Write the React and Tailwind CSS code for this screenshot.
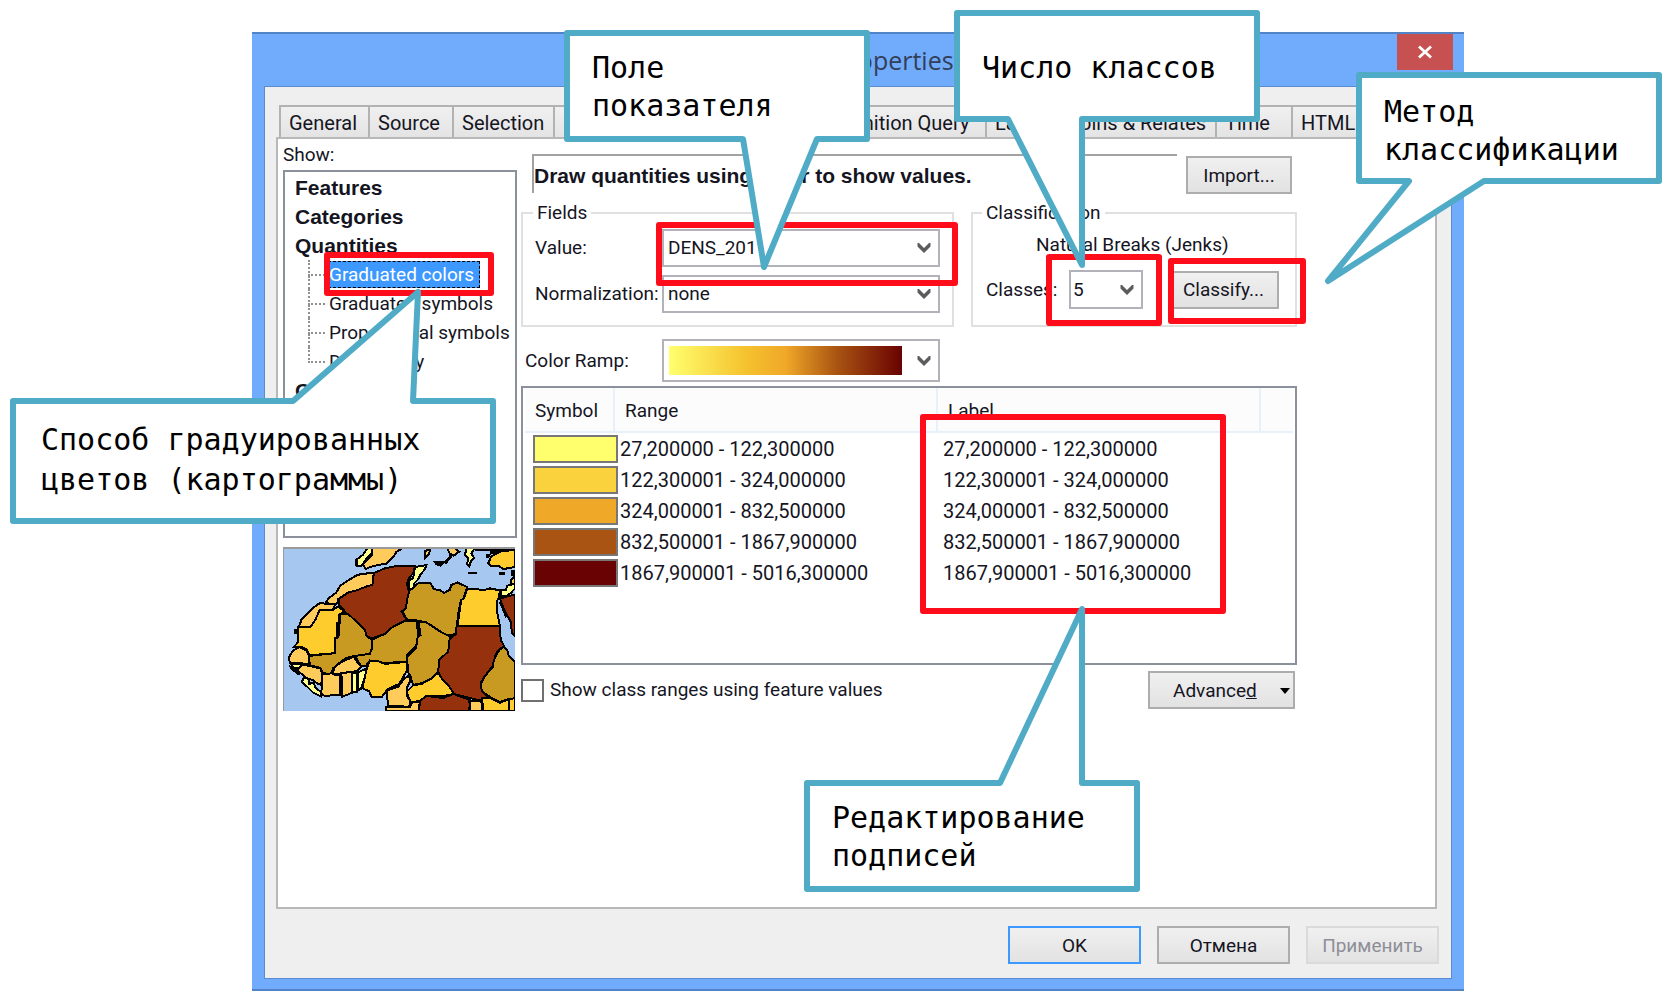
import React from "react";

const tabs = [
  { name: "General", width: "w-[89px]" },
  { name: "Source", width: "w-[84px]" },
  { name: "Selection", width: "w-[101px]" },
  { name: "Display", width: "w-[87px]", covered: true },
  { name: "Symbology", width: "w-[111px]", active: true, covered: true },
  { name: "Fields", width: "w-[67px]", covered: true },
  { name: "Definition Query", width: "w-[167px]" },
  { name: "Labels", width: "w-[74px]" },
  { name: "Joins & Relates", width: "w-[156px]" },
  { name: "Time", width: "w-[76px]" },
  { name: "HTML", width: "w-[120px]" },
];

const quantityOptions = [
  "Graduated colors",
  "Graduated symbols",
  "Proportional symbols",
  "Dot density",
];

const classes = [
  { color: "bg-[#ffff6e]", range: "27,200000 - 122,300000" },
  { color: "bg-[#fad23e]", range: "122,300001 - 324,000000" },
  { color: "bg-[#f0a828]", range: "324,000001 - 832,500000" },
  { color: "bg-[#a95412]", range: "832,500001 - 1867,900000" },
  { color: "bg-[#690202]", range: "1867,900001 - 5016,300000" },
];

const WATER = "#a6c8f0";
const ORANGE = "#ffcc5c";
const YELLOW = "#ffcc2e";
const TAN = "#c99a22";
const BROWN = "#96310e";
const PALE = "#ffff8c";

const countries = [
  [PALE, "262,110 260,90 280,75 292,56 312,56 306,72 290,86 276,108"],
  [ORANGE, "308,56 398,56 380,66 372,80 350,102 325,106 300,112 288,118 280,104 296,88 308,74"],
  [ORANGE, "466,64 480,58 478,74 466,84"],
  [ORANGE, "532,56 556,56 568,66 552,78 540,72"],
  [ORANGE, "494,96 520,98 512,108 500,104"],
  [PALE, "588,56 614,56 604,72 612,84 604,92 598,110 592,104 594,86 586,76"],
  [YELLOW, "655,100 664,80 690,66 735,60 735,112 700,118 685,108 662,108"],
  [ORANGE, "724,150 735,140 735,168 722,164"],
  [PALE, "692,182 708,180 712,168 735,162 735,176 722,190 710,198 694,200"],
  [ORANGE, "168,220 176,206 198,190 212,168 232,154 262,136 280,132 312,130 308,165 285,172 260,182 236,188 208,206 200,224"],
  [BROWN, "312,130 345,116 384,108 436,110 430,130 414,150 412,164 418,190 412,215 406,238 395,245 410,270 370,290 345,312 305,326 290,318 286,300 255,270 232,252 208,225 206,208 236,188 260,182 285,172 308,165"],
  [PALE, "436,112 470,106 464,120 452,134 444,150 434,160 430,180 420,184 416,152 430,146 432,130"],
  [TAN, "418,184 446,160 482,160 492,178 512,182 522,190 540,180 544,166 562,158 592,172 580,208 572,215 566,245 558,312 530,318 505,300 470,278 440,272 412,270 398,245 408,236 412,210"],
  [YELLOW, "592,178 620,178 640,182 660,176 690,182 686,204 680,215 680,240 690,290 562,290 570,240 574,210 582,206"],
  [BROWN, "560,290 690,290 692,330 702,348 684,362 676,376 670,405 645,438 632,460 636,484 655,500 630,512 600,504 550,492 538,470 515,445 505,425 505,395 515,378 535,365 538,330 558,312"],
  [TAN, "702,350 712,362 716,378 735,395 735,508 712,508 690,516 662,502 636,484 632,462 645,438 668,412 672,390 688,360"],
  [BROWN, "690,206 712,200 735,194 735,318 726,310 722,275 702,240"],
  [TAN, "446,276 470,278 510,305 540,320 535,365 508,390 505,425 485,445 455,460 430,465 422,440 414,425 412,380 438,355 442,320 452,316"],
  [TAN, "410,272 440,275 445,310 440,345 412,375 410,395 340,400 300,392 288,408 274,408 262,390 256,378 300,370 308,350 306,330 345,312 370,290"],
  [YELLOW, "300,392 320,392 345,402 410,396 412,420 388,462 356,476 345,490 335,502 305,500 298,484 278,475 290,420"],
  [TAN, "212,254 235,252 286,300 290,318 306,330 308,352 300,372 255,378 230,384 205,402 190,415 185,432 160,430 152,414 120,406 118,378 195,370 196,325 206,320"],
  [YELLOW, "86,292 120,292 138,268 150,240 190,240 205,230 224,245 208,255 206,320 196,325 195,370 120,376 112,360 96,352 72,352 86,336"],
  [ORANGE, "88,290 96,268 128,236 150,220 196,224 190,240 150,240 138,268 122,292"],
  [ORANGE, "58,382 70,362 90,352 110,362 118,378 118,402 60,398"],
  [PALE, "62,402 95,402 92,412 76,416"],
  [ORANGE, "82,420 98,404 120,408 152,416 157,430 155,465 142,460 130,450 112,446 100,436"],
  [PALE, "97,456 102,442 116,446 118,462 132,458 138,474 156,488 154,500 130,488 112,470"],
  [ORANGE, "157,434 185,430 200,436 212,436 212,494 165,498 155,492"],
  [ORANGE, "188,430 196,410 220,394 252,380 262,396 274,410 262,424 235,426 208,434"],
  [ORANGE, "215,430 246,426 250,450 248,488 218,500"],
  [PALE, "248,428 262,430 262,486 248,486"],
  [PALE, "264,428 290,416 286,440 274,476 264,482"],
  [ORANGE, "350,482 385,470 404,446 416,438 422,452 412,472 412,500 422,515 418,530 355,528"],
  [YELLOW, "412,484 430,466 455,462 485,446 505,428 515,445 538,470 552,492 520,498 470,498 450,512 425,518 414,498"],
  [BROWN, "450,512 470,498 520,504 550,492 600,510 598,543 448,543"],
  [ORANGE, "350,530 420,532 426,518 450,514 446,543 350,543"],
  [ORANGE, "598,512 634,514 638,543 602,543"],
  [YELLOW, "636,504 662,504 690,518 718,508 718,543 640,543"],
  [YELLOW, "718,508 735,504 735,543 718,543"],
];

function MapPreview() {
  return (
    <svg
      viewBox="40 52 695 491"
      preserveAspectRatio="none"
      shapeRendering="crispEdges"
      role="img"
      aria-label="Map preview"
      className="mt-[9px] block h-[164px] w-[232px]"
    >
      <rect x="40" y="52" width="695" height="491" fill={WATER} />
      {countries.map(([fill, points]) => (
        <polygon key={points} points={points} fill={fill} stroke="#000" strokeWidth="6" />
      ))}
      <g fill="#000">
        <path d="M614 56h121v8h-45l-14 10h-14l-6 12h-8v-14h12v-8h-46zM594 126h28v6h-28zM686 128h20v9h-20zM72 298h14v14h-14zM198 276h8v50h-8zM256 90h10v20h-10zM56 402l40 30-10 4-24-18zM494 94h26v8h-10v8h-10v-6h-6zM520 98l20-22 8 6-20 22zM724 120h11v18h-11zM258 430h8v56h-8zM690 210l24 50-8 4-18-44z" />
      </g>
      <path d="M40 543V54H735" fill="none" stroke="#9a9a9a" strokeWidth="6" />
    </svg>
  );
}

function Chevron() {
  return (
    <svg
      viewBox="0 0 14 12"
      className="pointer-events-none absolute right-[9px] top-1/2 h-3 w-[14px] -translate-y-1/2"
      aria-hidden="true"
    >
      <path d="M0.5 1v3.5L7 11 13.5 4.5V1L12 1 7 6 2 1z" fill="#5c5c5c" />
    </svg>
  );
}

function Combo({ id, options, className, textClass = "pl-1", children }) {
  return (
    <div className={`relative ${className}`}>
      <select
        id={id}
        className={`block h-full w-full appearance-none border-2 border-[#b1b2ba] bg-white pr-7 outline-none ${textClass}`}
      >
        {options.map((o) => (
          <option key={o}>{o}</option>
        ))}
      </select>
      {children}
      <Chevron />
    </div>
  );
}

function PushButton({ className = "", border = "border-[#adadad]", children, ...rest }) {
  return (
    <button
      type="button"
      className={`h-[38px] border-2 bg-linear-to-b from-[#f0f0f0] to-[#e2e2e2] pt-px ${border} ${className}`}
      {...rest}
    >
      {children}
    </button>
  );
}

function Tabs() {
  return (
    <div role="tablist" className="flex h-8 overflow-hidden pl-[14px] pr-[49px] text-[20px]">
      {tabs.map((t) => (
        <button
          key={t.name}
          type="button"
          role="tab"
          aria-selected={!!t.active}
          aria-label={t.name}
          className={`shrink-0 whitespace-nowrap border-l-2 border-t-2 border-[#b2b2b2] pl-2 pt-px text-left last:border-r-2 ${t.width} ${
            t.active ? "bg-white" : "bg-linear-to-b from-[#f0f0f0] to-[#e4e4e4]"
          }`}
        >
          {t.covered ? null : t.name}
        </button>
      ))}
    </div>
  );
}

const headingFont = "font-['Liberation_Sans',sans-serif] text-[21px] font-bold";

function ShowTree() {
  return (
    <ul className="h-[368px] overflow-hidden border-2 border-[#8b909d] bg-white pt-px leading-[29px]">
      <li className={`pl-[10px] ${headingFont} leading-[29px]`}>Features</li>
      <li className={`pl-[10px] ${headingFont} leading-[29px]`}>Categories</li>
      <li>
        <span className={`block pl-[10px] ${headingFont} leading-[29px]`}>Quantities</span>
        <ul className="pl-[23px]">
          {quantityOptions.map((name, i) => (
            <li key={name} className="flex h-[29px] items-stretch">
              <span className="flex w-5 flex-col pr-[3px]" aria-hidden="true">
                <span className="h-4 border-b-2 border-l-2 border-dotted border-[#909090]" />
                {i < quantityOptions.length - 1 && (
                  <span className="flex-1 border-l-2 border-dotted border-[#909090]" />
                )}
              </span>
              <button
                type="button"
                className={
                  i === 0
                    ? "my-px whitespace-nowrap border border-dashed border-black bg-[#3d98ff] pr-[5px] leading-[26px] text-white"
                    : "whitespace-nowrap pl-px leading-[30px]"
                }
              >
                {name}
              </button>
            </li>
          ))}
        </ul>
      </li>
      <li className={`pl-[10px] ${headingFont} leading-[29px]`}>Charts</li>
    </ul>
  );
}

function FieldsGroup() {
  return (
    <fieldset className="min-w-0 border-2 border-[#e0e0e0] pb-3 pl-[10px] pr-3">
      <legend className="px-1">Fields</legend>
      <div className="flex items-center pt-1">
        <label htmlFor="value" className="w-[129px] shrink-0 pl-[2px]">
          Value:
        </label>
        <Combo id="value" options={["DENS_2011"]} className="h-[38px] flex-1" />
      </div>
      <div className="mt-2 flex items-center">
        <label htmlFor="norm" className="w-[129px] shrink-0 whitespace-nowrap pl-[2px]">
          Normalization:
        </label>
        <Combo id="norm" options={["none"]} className="h-[38px] flex-1" />
      </div>
    </fieldset>
  );
}

function ClassificationGroup() {
  return (
    <fieldset className="min-w-0 border-2 border-[#e0e0e0] pb-4 pl-[9px]">
      <legend className="px-1">Classification</legend>
      <p className="pl-[54px] pt-2">Natural Breaks (Jenks)</p>
      <div className="mt-[13px] flex items-center pl-1">
        <label htmlFor="classes" className="w-[83px] shrink-0">
          Classes:
        </label>
        <Combo id="classes" options={["5"]} className="h-[39px] w-[74px]" textClass="pl-[2px]" />
        <PushButton className="ml-[25px] w-[111px]">Classify...</PushButton>
      </div>
    </fieldset>
  );
}

function ClassTable() {
  return (
    <div className="mt-1 h-[279px] border-2 border-[#8b909d] bg-white px-[2px]">
      <table className="w-full table-fixed border-separate border-spacing-0">
        <colgroup>
          <col className="w-[90px]" />
          <col className="w-[323px]" />
          <col className="w-[323px]" />
          <col />
        </colgroup>
        <thead>
          <tr className="h-[45px] bg-[#fcfcfc] text-left">
            <th className="border-b-2 border-r-2 border-[#e8f1fb] pl-[10px] pt-[3px] font-normal">Symbol</th>
            <th className="border-b-2 border-r-2 border-[#e8f1fb] pl-[10px] pt-[3px] font-normal">Range</th>
            <th className="border-b-2 border-r-2 border-[#e8f1fb] pl-[10px] pt-[3px] font-normal">Label</th>
            <th className="border-b-2 border-[#e8f1fb]" aria-label="Spare column" />
          </tr>
        </thead>
        <tbody className="text-[20px]">
          {classes.map((c) => (
            <tr key={c.range} className="h-[31px]">
              <td className="pl-2">
                <div className={`h-7 w-[85px] border-2 border-[#777] ${c.color}`} />
              </td>
              <td className="whitespace-nowrap pl-[5px]">{c.range}</td>
              <td className="whitespace-nowrap pl-[5px]">{c.range}</td>
              <td />
            </tr>
          ))}
        </tbody>
      </table>
    </div>
  );
}

function Panel() {
  return (
    <div className="ml-[11px] mr-[14px] flex border-2 border-[#b8b8b8] bg-white pb-[196px] pl-[5px]">
      <div className="w-[234px] shrink-0 pt-1">
        <p className="h-[27px]">Show:</p>
        <ShowTree />
        <MapPreview />
      </div>
      <div className="ml-1 mr-[138px] min-w-0 flex-1 pt-[15px]">
        <div className="flex h-[39px] items-start gap-[9px] pl-[11px] pr-[5px]">
          <h2
            className={`h-[39px] flex-1 whitespace-nowrap border-l-2 border-t-2 border-[#a2a2a2] pt-[2px] ${headingFont} leading-9`}
          >
            Draw quantities using color to show values.
          </h2>
          <PushButton className="mt-[2px] w-[106px]">Import...</PushButton>
        </div>
        <div className="mt-2 grid grid-cols-[433fr_326fr] gap-[17px]">
          <FieldsGroup />
          <ClassificationGroup />
        </div>
        <div className="mt-3 flex items-center pl-1 pr-[357px]">
          <label htmlFor="ramp" className="w-[137px] shrink-0">
            Color Ramp:
          </label>
          <Combo id="ramp" options={["Yellow to dark red"]} className="h-[43px] flex-1" textClass="text-transparent">
            <div className="pointer-events-none absolute bottom-[7px] left-[7px] right-[38px] top-[7px] bg-[linear-gradient(to_right,#ffff6e,#f5c22e_33%,#f0a828_50%,#a95412_72%,#690202)]" />
          </Combo>
        </div>
        <ClassTable />
        <div className="mt-[6px] flex items-center justify-between pr-[2px]">
          <label className="flex items-center gap-[6px]">
            <input type="checkbox" className="h-[23px] w-[23px] appearance-none border-2 border-[#707070] bg-white" />
            Show class ranges using feature values
          </label>
          <PushButton className="flex w-[147px] items-center justify-between pl-[23px] pr-[3px]">
            <span>
              Advance<span className="underline">d</span>
            </span>
            <svg viewBox="0 0 10 6" className="h-[6px] w-[10px]" aria-hidden="true">
              <path d="M0 0h10L5 6z" />
            </svg>
          </PushButton>
        </div>
      </div>
    </div>
  );
}

function DialogWindow() {
  return (
    <section className="border-y-2 border-[#5183c6] bg-[#70abfc] pb-[10px]">
      <header className="grid h-[52px] grid-cols-[1fr_auto_1fr] px-[11px]">
        <span />
        <h1 className="pt-[7px] font-['Open_Sans',sans-serif] text-[25px] leading-[38px] text-[#333e58]">
          Layer Properties
        </h1>
        <button
          type="button"
          aria-label="Close"
          className="flex h-9 w-14 items-center justify-center justify-self-end bg-[#c75050]"
        >
          <svg viewBox="0 0 16 14" className="h-[14px] w-4" aria-hidden="true">
            <path d="M2 1.5 14 12.5M14 1.5 2 12.5" stroke="#fff" strokeWidth="2.8" />
          </svg>
        </button>
      </header>
      <div className="mx-3 border border-[#5b8bd0] bg-[#efefef] pb-[14px] pt-[18px]">
        <Tabs />
        <Panel />
        <footer className="mr-3 mt-[17px] flex justify-end gap-4">
          <PushButton className="w-[133px]" border="border-[#3d98ff]">
            OK
          </PushButton>
          <PushButton className="w-[133px]">Отмена</PushButton>
          <PushButton className="w-[133px] text-[#8e8e98]" border="border-[#dadada]" disabled>
            Применить
          </PushButton>
        </footer>
      </div>
    </section>
  );
}

const frames = [
  "left-[324px] top-[252px] h-[44px] w-[170px]",
  "left-[656px] top-[222px] h-[64px] w-[302px]",
  "left-[1046px] top-[254px] h-[72px] w-[116px]",
  "left-[1168px] top-[258px] h-[66px] w-[138px]",
  "left-[920px] top-[414px] h-[200px] w-[306px]",
];

const callouts = [
  {
    text: ["Поле", "показателя"],
    outline: "567,33 867,33 867,139 817,139 764,267 743,139 567,139",
    place: "left-[567px] top-[33px] pl-[25px] pt-4 leading-[38px]",
  },
  {
    text: ["Число классов"],
    outline: "957,13 1257,13 1257,119 1082,119 1082,265 1008,119 957,119",
    place: "left-[957px] top-[13px] pl-[25px] pt-9 leading-[38px]",
  },
  {
    text: ["Метод", "классификации"],
    outline: "1359,75 1659,75 1659,181 1484,181 1328,281 1409,181 1359,181",
    place: "left-[1359px] top-[75px] pl-[25px] pt-[18px] leading-[38px]",
  },
  {
    text: ["Способ градуированных", "цветов (картограммы)"],
    outline: "13,401 293,401 418,292 413,401 493,401 493,521 13,521",
    place: "left-[13px] top-[401px] pl-7 pt-[19px] leading-[40px]",
  },
  {
    text: ["Редактирование", "подписей"],
    outline: "807,783 1000,783 1082,609 1082,783 1137,783 1137,889 807,889",
    place: "left-[807px] top-[783px] pl-[25px] pt-4 leading-[38px]",
  },
];

function Annotations() {
  return (
    <div className="pointer-events-none absolute inset-0 overflow-hidden">
      {frames.map((f) => (
        <div key={f} className={`absolute rounded-[3px] border-6 border-[#ff0d1b] ${f}`} />
      ))}
      <svg className="absolute left-0 top-0 h-[1004px] w-[1670px]" aria-hidden="true">
        {callouts.map((c) => (
          <polygon
            key={c.outline}
            points={c.outline}
            fill="#fff"
            stroke="#50acc6"
            strokeWidth="6"
            strokeLinejoin="round"
          />
        ))}
      </svg>
      {callouts.map((c) => (
        <p
          key={c.text[0]}
          className={`absolute whitespace-nowrap font-['DejaVu_Sans_Mono',monospace] text-[30px] text-black ${c.place}`}
        >
          {c.text.map((line) => (
            <span key={line} className="block">
              {line}
            </span>
          ))}
        </p>
      ))}
    </div>
  );
}

export default function App() {
  return (
    <main className="relative min-h-screen bg-white pb-3 pl-[252px] pr-[206px] pt-8 font-[Roboto,sans-serif] text-[19px] leading-6 text-[#15151f]">
      <DialogWindow />
      <Annotations />
    </main>
  );
}
